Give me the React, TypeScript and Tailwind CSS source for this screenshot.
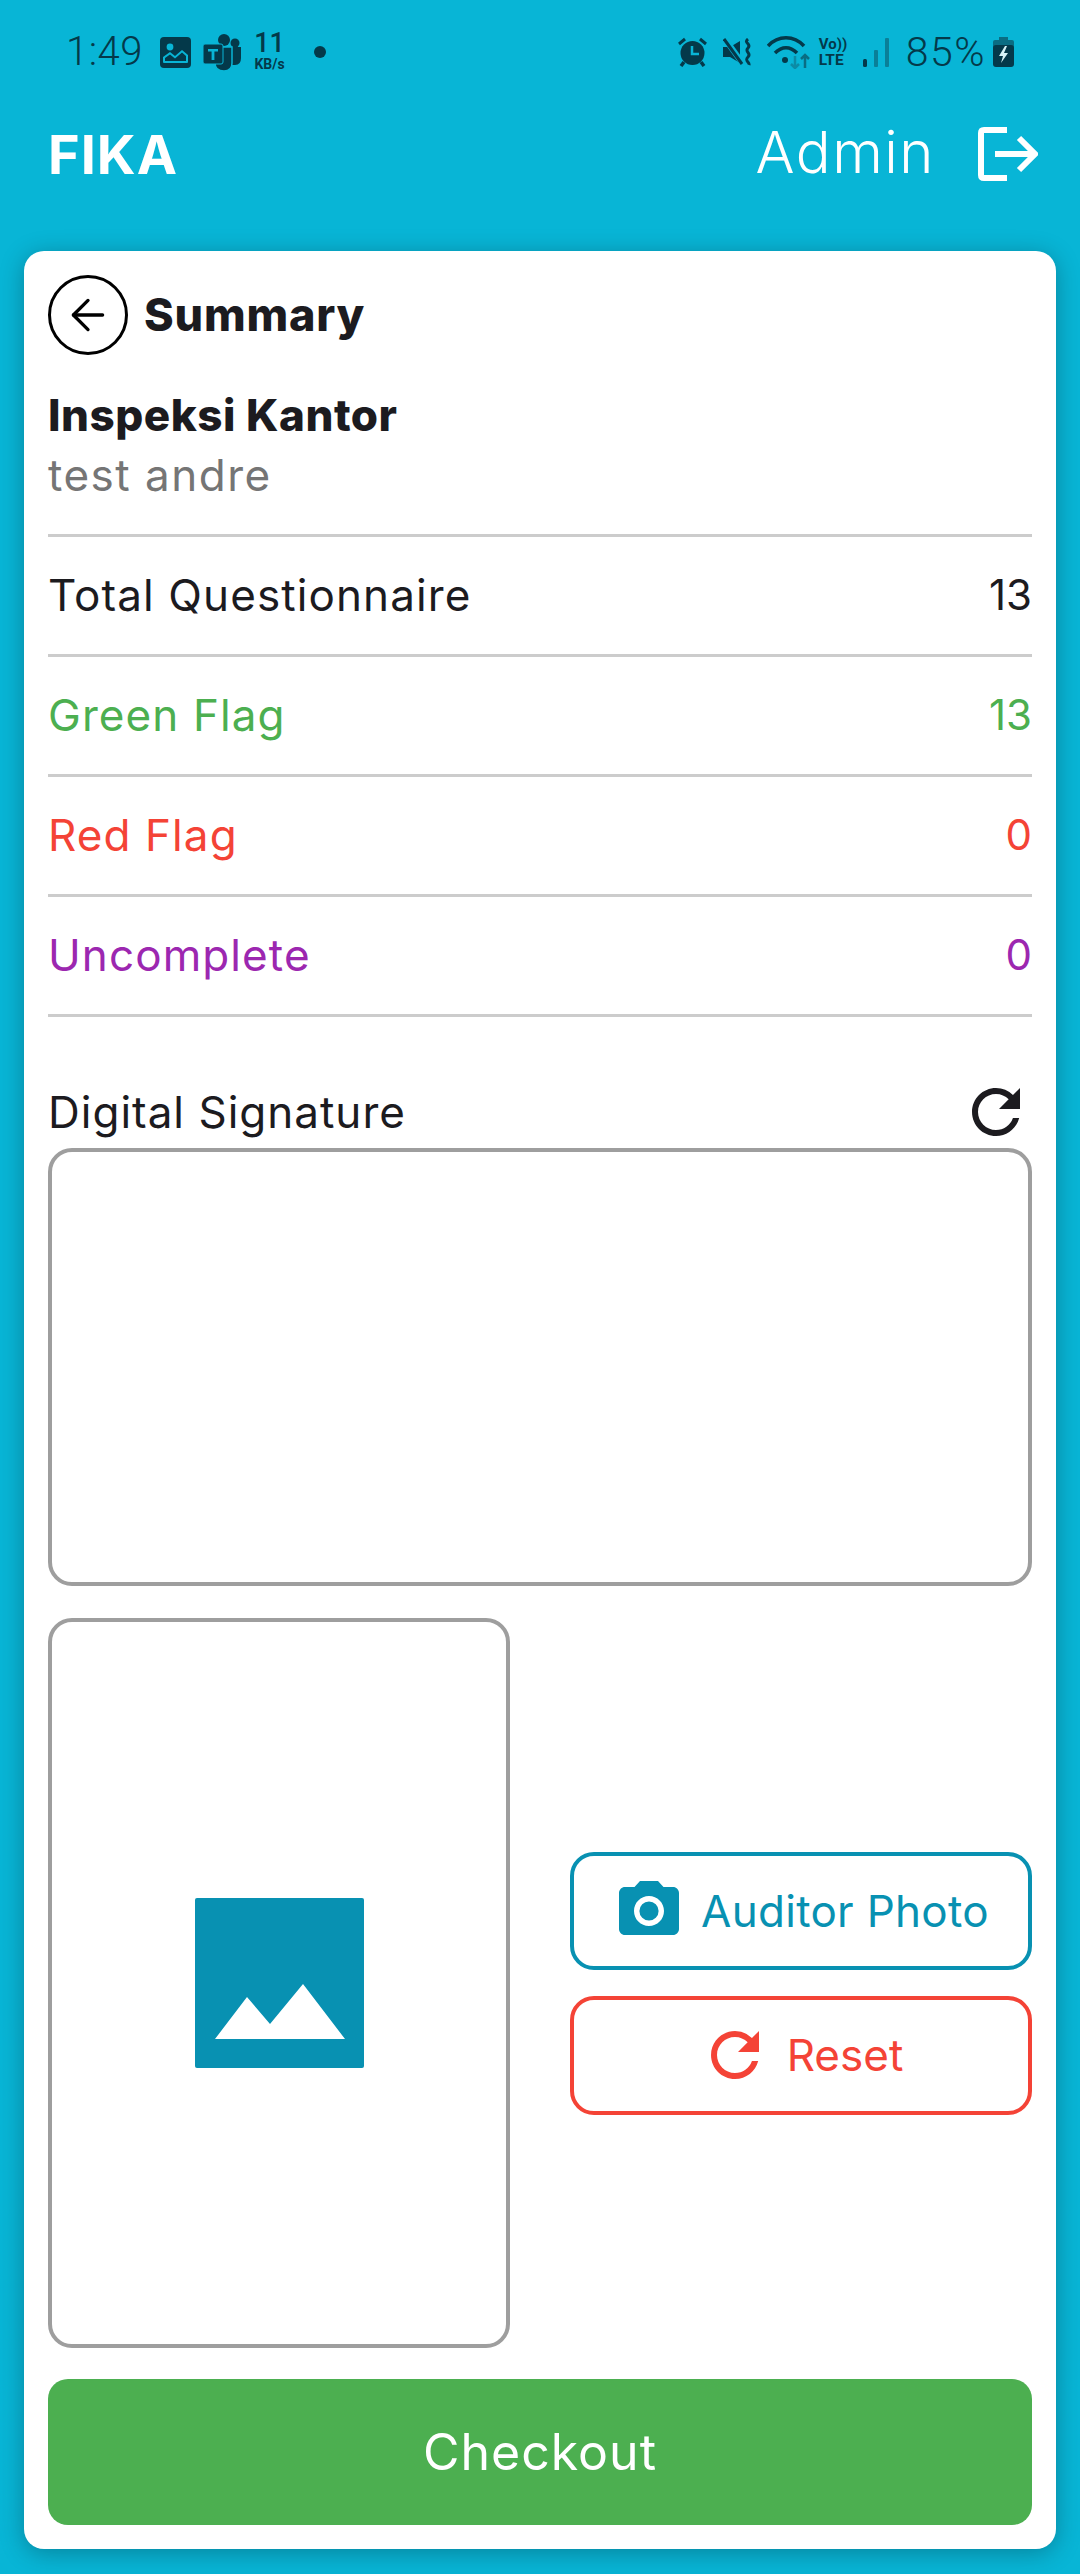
import { ArrowLeft } from "lucide-react";

const refreshPath =
  "M17.65 6.35A7.958 7.958 0 0 0 12 4c-4.42 0-7.99 3.58-7.99 8s3.57 8 7.99 8c3.73 0 6.84-2.55 7.73-6h-2.08A5.99 5.99 0 0 1 12 18c-3.31 0-6-2.69-6-6s2.69-6 6-6c1.66 0 3.14.69 4.22 1.78L13 11h7V4l-2.35 2.35z";

const dark = "#04394a";
const cyan = "#08b5d6";

const rows = [
  { label: "Total Questionnaire", value: "13", color: "text-[#1c1b1f]" },
  { label: "Green Flag", value: "13", color: "text-[#4caf50]" },
  { label: "Red Flag", value: "0", color: "text-[#f44336]" },
  { label: "Uncomplete", value: "0", color: "text-[#9c27b0]" },
];

function RefreshIcon({ color }: { color: string }) {
  return (
    <svg viewBox="0 0 24 24" className={`w-[72px] h-[72px] shrink-0 ${color}`} fill="currentColor">
      <path d={refreshPath} />
    </svg>
  );
}

function StatusBar() {
  return (
    <div className="h-[104px] pl-[66px] pr-[66px] flex items-center justify-between text-[#04394a] font-['Roboto',sans-serif]">
      <div className="flex items-center">
        <span className="text-[40px] font-light leading-none w-[94px] tracking-[0.5px]">1:49</span>
        {/* gallery */}
        <svg width="31" height="31" viewBox="0 0 31 31">
          <rect width="31" height="31" rx="4" fill={dark} />
          <circle cx="10" cy="10" r="3.4" fill={cyan} />
          <path d="M3 25v-5l7-5 5 4 7-6 6 5v7q0 1-1 1H4q-1 0-1-1z" fill={cyan} />
          <path d="M5 24v-3l5-3.400 5 4 7-6 4 3.400v5z" fill={dark} />
        </svg>
        {/* teams */}
        <svg width="39" height="37" viewBox="0 0 39 37" className="ml-[12px]">
          <circle cx="21" cy="6" r="6" fill={dark} />
          <circle cx="32" cy="9" r="4.500" fill={dark} />
          <path d="M25 13h13v11q0 7-6 7h-7z" fill={dark} />
          <path d="M12 13h17v16q0 8-8 8-9 0-9-8z" fill={dark} stroke={cyan} strokeWidth="1.500" />
          <rect x="0" y="10" width="20" height="20" rx="2" fill={dark} stroke={cyan} strokeWidth="1" />
          <path d="M5 15h10v2.500h-3.600V26H8.600v-8.500H5z" fill={cyan} />
        </svg>
        <div className="ml-[10px] w-[35px] flex flex-col items-center font-medium">
          <span className="text-[27px] leading-[27px] -mt-[3px]">11</span>
          <span className="text-[14px] leading-[14px] font-bold">KB/s</span>
        </div>
        <span className="ml-[27px] w-[12px] h-[12px] rounded-full bg-[#04394a]" />
      </div>
      <div className="flex items-center">
        {/* alarm */}
        <svg width="29" height="30" viewBox="0 0 29 30">
          <circle cx="14.500" cy="16" r="12" fill={dark} />
          <path d="M14 9v8h7" fill="none" stroke={cyan} strokeWidth="2.500" />
          <path d="M1 7l6-5M28 7l-6-5" stroke={dark} strokeWidth="3" />
          <path d="M6 25l-3 4M23 25l3 4" stroke={dark} strokeWidth="3.500" />
        </svg>
        {/* vibrate mute */}
        <svg width="30" height="28" viewBox="0 0 30 28" className="ml-[16px]">
          <path d="M0 9h7l10-6v22L7 19H0z" fill={dark} />
          <path d="M2 1l18 25" stroke={cyan} strokeWidth="6" />
          <path d="M1 1l18 25" stroke={dark} strokeWidth="3" />
          <path d="M25 1c-5 4 4 5 0 9s4 5 0 9 2 5 1 8" fill="none" stroke={dark} strokeWidth="3" />
        </svg>
        {/* wifi with arrows */}
        <svg width="44" height="33" viewBox="0 0 44 33" className="ml-[14px]">
          <path d="M1 10c10-11 26-11 36 0" fill="none" stroke={dark} strokeWidth="3.500" />
          <path d="M8 17c7-7 15-7 22 0" fill="none" stroke={dark} strokeWidth="3.500" />
          <circle cx="18" cy="24" r="3" fill={dark} />
          <path d="M28 20v12m-4-4 4 4 4-4" fill="none" stroke="#0c8ba5" strokeWidth="2.500" />
          <path d="M38 32V19m-4 4 4-4 4 4" fill="none" stroke="#0a6d83" strokeWidth="2.500" />
        </svg>
        <div className="ml-[8px] w-[32px] flex flex-col leading-none font-bold">
          <span className="text-[15px] leading-[15px]">Vo))</span>
          <span className="text-[15.500px] leading-[16px]">LTE</span>
        </div>
        {/* signal */}
        <svg width="27" height="29" viewBox="0 0 27 29" className="ml-[12px]">
          <rect x="0" y="21" width="4" height="8" rx="1.500" fill={dark} />
          <rect x="11" y="12" width="4" height="17" rx="1" fill="#0a7f98" />
          <rect x="22" y="0" width="4" height="29" rx="1" fill="#0a7f98" />
        </svg>
        <span className="ml-[16px] text-[41px] font-light leading-none tracking-[1.5px]">85%</span>
        {/* battery */}
        <svg width="21" height="30" viewBox="0 0 21 30" className="ml-[7px]">
          <rect x="6" y="0" width="9" height="4" fill="#0a6d83" />
          <rect x="0" y="3" width="21" height="9" rx="2" fill="#0a6d83" />
          <rect x="0" y="8" width="21" height="22" rx="3" fill={dark} />
          <path d="M12 9l-6 10h4l-2 7 7-10h-4l3-7z" fill="#d6f3f8" />
        </svg>
      </div>
    </div>
  );
}

export default function App() {
  return (
    <div className="w-[1080px] h-[2574px] bg-[#08b5d6] flex flex-col overflow-hidden font-['Inter',sans-serif]">
      <StatusBar />

      <div className="h-[100px] pl-[48px] pr-[42px] flex items-center justify-between text-white">
        <span className="text-[54px] font-bold tracking-[1px]">FIKA</span>
        <div className="flex items-center">
          <span className="text-[58px] font-light tracking-[1.5px] -mt-[4px]">Admin</span>
          <svg width="60" height="54" viewBox="0 0 60 54" className="ml-[43px]" fill="none" stroke="white" strokeWidth="6">
            <path d="M29 3H6q-3 0-3 3v42q0 3 3 3h23" />
            <path d="M17 27h40M41 11l16 16-16 16" />
          </svg>
        </div>
      </div>

      <div className="mt-[47px] mx-[24px] h-[2298px] bg-white rounded-[20px] p-[24px] flex flex-col shadow-[0_4px_24px_rgba(0,0,0,0.28)]">
        <div className="flex items-center">
          <div className="w-[80px] h-[80px] rounded-full border-[3px] border-black flex items-center justify-center">
            <ArrowLeft size={50} strokeWidth={1.6} className="text-black" />
          </div>
          <span className="ml-[16px] text-[45px] font-extrabold tracking-[0.8px] text-[#1c1b1f]">Summary</span>
        </div>

        <div className="mt-[30px] text-[44px] leading-[60px] font-extrabold tracking-[0.5px] text-[#1c1b1f]">Inspeksi Kantor</div>
        <div className="text-[44px] leading-[60px] tracking-[1.5px] text-[#757575]">test andre</div>

        <div className="mt-[29px] border-t-[3px] border-[#cccccc]">
          {rows.map((row) => (
            <div
              key={row.label}
              className={`h-[120px] flex items-center justify-between border-b-[3px] border-[#cccccc] text-[44px] tracking-[1.100px] ${row.color}`}
            >
              <span className="-mt-[2px]">{row.label}</span>
              <span className="-mt-[2px] text-[42px] tracking-normal">{row.value}</span>
            </div>
          ))}
        </div>

        <div className="mt-[59px] h-[72px] flex items-center justify-between">
          <span className="text-[44px] tracking-[1px] text-[#1c1b1f]">Digital Signature</span>
          <RefreshIcon color="text-[#1c1b1f]" />
        </div>
        <div className="h-[438px] border-[4px] border-[#9e9e9e] rounded-[24px]" />

        <div className="mt-[32px] h-[730px] flex">
          <div className="w-[462px] border-[4px] border-[#9e9e9e] rounded-[24px] flex items-center justify-center">
            <svg width="169" height="170" viewBox="0 0 169 170">
              <rect width="169" height="170" rx="2" fill="#0891b2" />
              <path d="M20 141 52 99 75 126 108 86 150 141z" fill="white" />
            </svg>
          </div>
          <div className="ml-[60px] flex-1 flex flex-col justify-center gap-[26px]">
            <button className="h-[118px] border-[4px] border-[#0891b2] rounded-[24px] flex items-center justify-center gap-[16px] text-[44px] tracking-[0.3px] text-[#0891b2]">
              <svg viewBox="0 0 24 24" className="w-[72px] h-[72px] shrink-0" fill="currentColor">
                <path d="M12 15.200a3.200 3.200 0 1 0 0-6.400 3.200 3.200 0 0 0 0 6.400z" />
                <path d="M9 2 7.170 4H4c-1.100 0-2 .9-2 2v12c0 1.100.9 2 2 2h16c1.100 0 2-.9 2-2V6c0-1.100-.9-2-2-2h-3.170L15 2H9zm3 15c-2.760 0-5-2.240-5-5s2.240-5 5-5 5 2.240 5 5-2.240 5-5 5z" />
              </svg>
              <span>Auditor Photo</span>
            </button>
            <button className="h-[119px] border-[4px] border-[#f44336] rounded-[24px] flex items-center justify-center gap-[16px] text-[44px] text-[#f44336]">
              <RefreshIcon color="text-[#f44336]" />
              <span>Reset</span>
            </button>
          </div>
        </div>

        <button className="mt-[31px] h-[146px] bg-[#4caf50] rounded-[20px] text-white text-[50px] tracking-[1px]">Checkout</button>
      </div>
    </div>
  );
}
